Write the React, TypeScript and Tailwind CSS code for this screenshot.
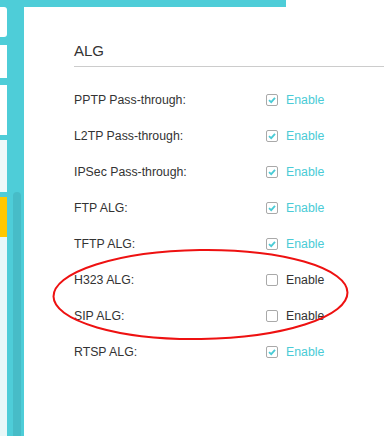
import React from 'react';

const rows = [
  { label: 'PPTP Pass-through:', on: true },
  { label: 'L2TP Pass-through:', on: true },
  { label: 'IPSec Pass-through:', on: true },
  { label: 'FTP ALG:', on: true },
  { label: 'TFTP ALG:', on: true },
  { label: 'H323 ALG:', on: false },
  { label: 'SIP ALG:', on: false },
  { label: 'RTSP ALG:', on: true },
];

function Checkbox({ on }: { on: boolean }) {
  return (
    <div className="w-[12px] h-[12px] border border-[#a9a9a9] rounded-[2px] bg-white flex items-center justify-center">
      {on && (
        <svg width="8" height="8" viewBox="0 0 8 8">
          <path d="M1 4.2 L3.2 6.2 L7 1.8" fill="none" stroke="#4acbd6" strokeWidth="1.8" />
        </svg>
      )}
    </div>
  );
}

export default function App() {
  return (
    <div
      className="relative w-[384px] h-[436px] overflow-hidden bg-white flex flex-col"
      style={{ fontFamily: '"Liberation Sans", Arial, sans-serif' }}
    >
      {/* top bar */}
      <div className="h-[7px] w-[286px] bg-[#4ecdd8]" />

      <div className="flex flex-1">
        {/* side rail */}
        <div className="w-[24px] bg-[#4ecdd8] flex">
          <div className="w-[7px] flex flex-col">
            <div className="h-[30px] bg-white rounded-r-[3px]" />
            <div className="h-[8px]" />
            <div className="h-[33px] bg-white" />
            <div className="h-[7px]" />
            <div className="h-[50px] bg-white" />
            <div className="h-[5px]" />
            <div className="h-[52px] bg-[#eef9fa]" />
            <div className="h-[5px]" />
            <div className="h-[40px] bg-[#ffc800]" />
            <div className="flex-1 bg-[#e8f8f9]" />
          </div>
          <div className="w-[6px]" />
          <div className="w-[8px] flex flex-col">
            <div className="h-[185px]" />
            <div className="flex-1 bg-[#47bcc7] rounded-t-[4px]" />
          </div>
        </div>

        {/* main */}
        <div className="flex-1 pl-[50px]">
          <div className="pt-[34px] pb-[5px] border-b border-[#cccccc]">
            <div className="text-[15px] leading-[20px] text-[#333]">ALG</div>
          </div>
          <div className="mt-[15px]">
            {rows.map((r, i) => (
              <div key={i} className="h-[36px] flex items-center text-[12.3px] text-[#333]">
                <div className="w-[192px]">{r.label}</div>
                <Checkbox on={r.on} />
                <span className={`ml-[8px] ${r.on ? 'text-[#4acbd6]' : 'text-[#333]'}`}>Enable</span>
              </div>
            ))}
          </div>
        </div>
      </div>

      {/* red annotation */}
      <svg className="absolute left-0 top-0 pointer-events-none" width="384" height="436">
        <ellipse cx="200.5" cy="294.5" rx="147" ry="44.5" fill="none" stroke="#ee1111" strokeWidth="2" transform="rotate(-0.8 200.5 294.5)" />
      </svg>
    </div>
  );
}
